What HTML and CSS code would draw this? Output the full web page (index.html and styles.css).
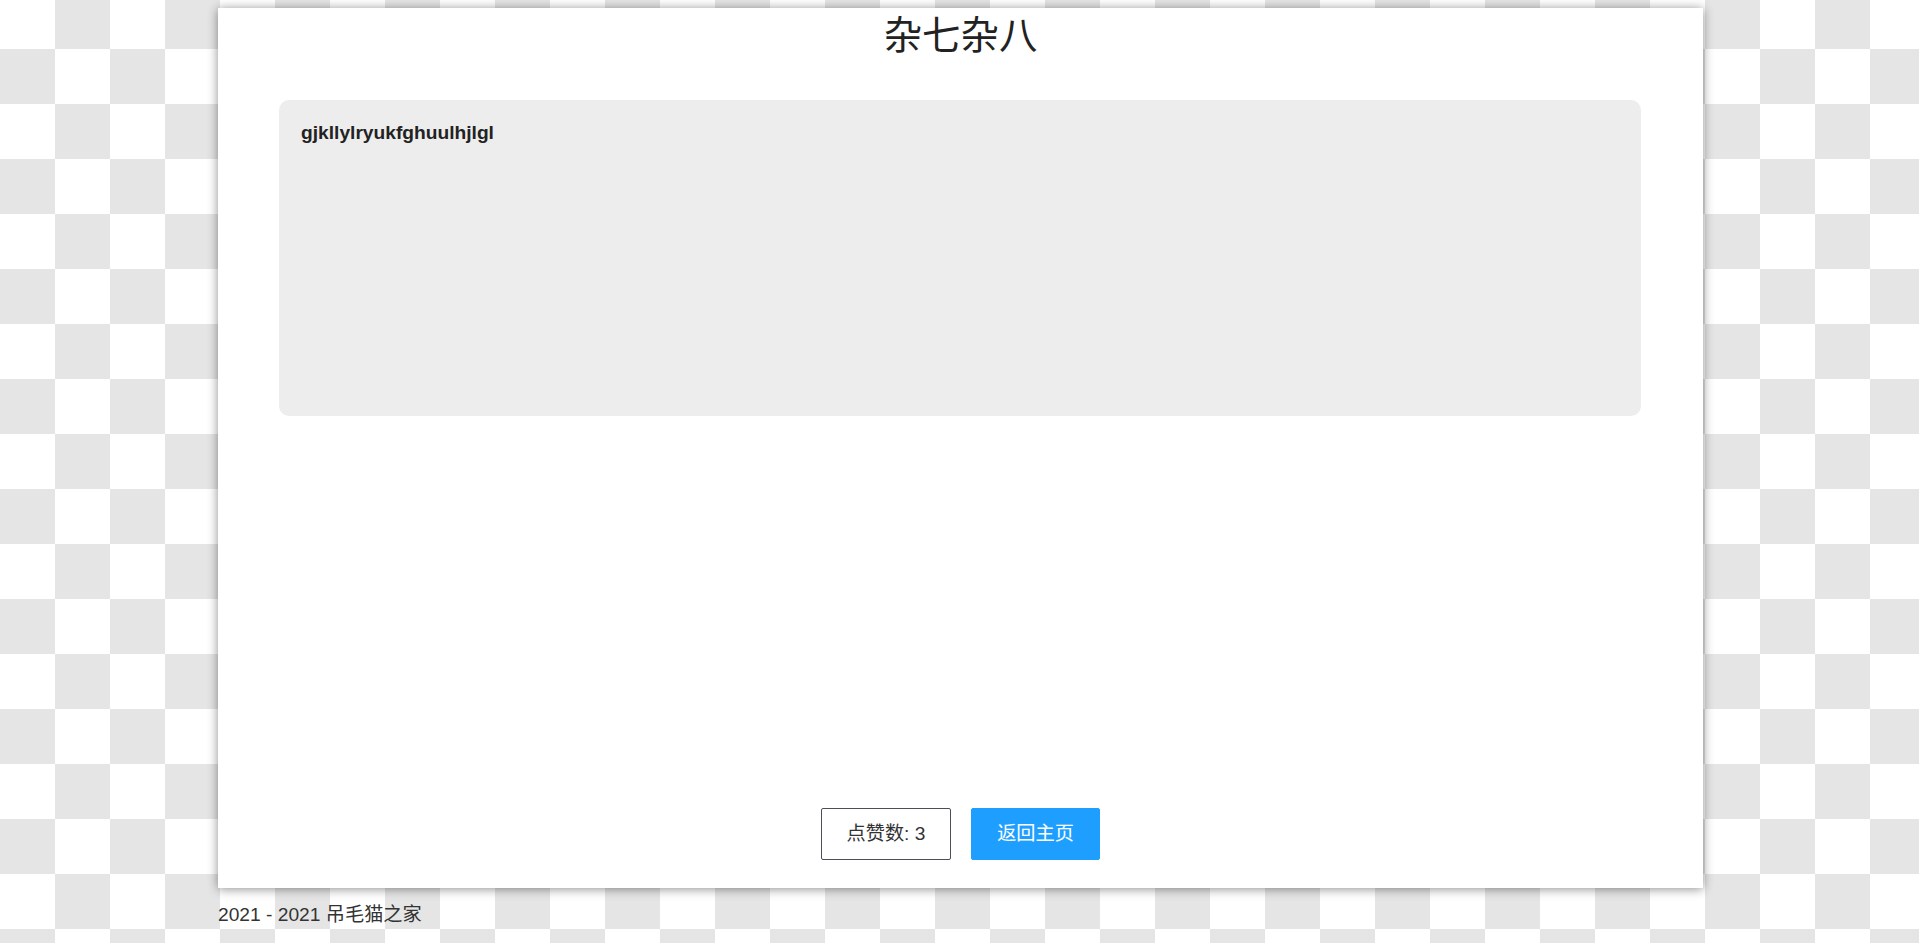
FILE: index.html
```html
<!DOCTYPE html>
<html lang="zh-CN">
<head>
<meta charset="utf-8">
<title>杂七杂八</title>
<link rel="stylesheet" href="styles.css">
</head>
<body>
  <main class="card">
    <h1 class="title">杂七杂八</h1>
    <section class="content">
      <p class="content-text">gjkllylryukfghuulhjlgl</p>
    </section>
    <div class="actions">
      <button class="btn btn-outline" type="button">点赞数: 3</button>
      <button class="btn btn-blue" type="button">返回主页</button>
    </div>
  </main>
  <footer class="footer">2021 - 2021 吊毛猫之家</footer>
</body>
</html>
```

FILE: styles.css
```css
html, body {
  margin: 0;
  padding: 0;
}

body {
  min-height: 943px;
  font-family: "Liberation Sans", "Noto Sans CJK SC", sans-serif;
  font-size: 19.2px;
  color: #333;
  background: #fff repeating-conic-gradient(#e5e5e5 0 25%, #ffffff 0 50%) 0 -6px / 110px 110px;
}

.card {
  box-sizing: border-box;
  width: 1485px;
  height: 880px;
  margin: 8px 0 0 calc((100% - 1485px) / 2 + 1px);
  background: #fff;
  box-shadow: 0 1px 10px rgba(0, 0, 0, 0.45);
  display: flex;
  flex-direction: column;
}

.title {
  margin: 0;
  height: 55px;
  line-height: 55px;
  text-align: center;
  font-size: 38.4px;
  font-weight: normal;
  color: #222;
}

.content {
  box-sizing: border-box;
  height: 316px;
  margin: 37px 62px 0 61px;
  padding: 21px 21px 21px 22px;
  background: #ededed;
  border-radius: 10px;
}

.content-text {
  margin: 0;
  font-weight: bold;
  font-size: 19.2px;
  line-height: 23px;
  color: #222;
}

.actions {
  margin-top: auto;
  margin-bottom: 28px;
  display: flex;
  justify-content: center;
  gap: 20px;
}

.btn {
  box-sizing: border-box;
  height: 52px;
  padding: 0;
  border-radius: 2px;
  font-family: "Liberation Sans", "Noto Sans CJK SC", sans-serif;
  font-size: 19.2px;
  line-height: 50px;
  cursor: pointer;
}

.btn-outline {
  width: 130px;
  background: #fff;
  color: #333;
  border: 1px solid #4b4d59;
}

.btn-blue {
  width: 129px;
  background: #1e9fff;
  color: #fff;
  border: 1px solid #1e9fff;
}

.footer {
  width: 1485px;
  margin: 15px 0 0 calc((100% - 1485px) / 2 + 1px);
  line-height: 24px;
  font-size: 19.2px;
  color: #333;
}
```
